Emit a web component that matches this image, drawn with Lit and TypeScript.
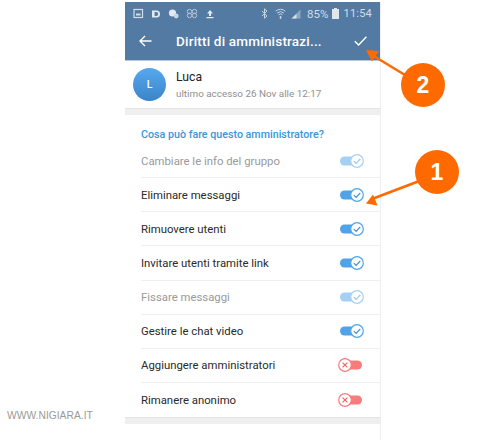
import { LitElement, html, css, svg } from "lit";
import { customElement } from "lit/decorators.js";

const rows: [string, "on" | "dim" | "off"][] = [
  ["Cambiare le info del gruppo", "dim"],
  ["Eliminare messaggi", "on"],
  ["Rimuovere utenti", "on"],
  ["Invitare utenti tramite link", "on"],
  ["Fissare messaggi", "dim"],
  ["Gestire le chat video", "on"],
  ["Aggiungere amministratori", "off"],
  ["Rimanere anonimo", "off"],
];

const toggle = (s: string) =>
  s === "off"
    ? svg`<svg class="tg" width="26" height="16" viewBox="0 0 26 16">
        <rect x="5" y="3.5" width="20" height="9" rx="4.5" fill="#f87c7c"/>
        <circle cx="8" cy="8" r="6.3" fill="#fff" stroke="#f87c7c" stroke-width="1.2"/>
        <path d="M5.6 5.6l4.8 4.8M10.4 5.6l-4.8 4.8" stroke="#ef6a6a" stroke-width="1.3" fill="none"/>
      </svg>`
    : svg`<svg class="tg" width="26" height="16" viewBox="0 0 26 16" opacity=${s === "dim" ? 0.5 : 1}>
        <rect x="1" y="3.5" width="20" height="9" rx="4.5" fill="#4fa3e6"/>
        <circle cx="18" cy="8" r="6.3" fill="#fff" stroke="#4fa3e6" stroke-width="1.2"/>
        <path d="M14.8 8.2l2.3 2.3 4.2-4.6" stroke="#3f8fd0" stroke-width="1.2" fill="none"/>
      </svg>`;

@customElement("app-root")
export class AppRoot extends LitElement {
  static styles = css`
    :host {
      display: flex;
      position: relative;
      width: 500px;
      height: 440px;
      overflow: hidden;
      background: #fff;
      font-family: Roboto, "Liberation Sans", sans-serif;
    }
    .side {
      width: 125px;
      display: flex;
      align-items: flex-end;
      padding: 0 0 17px 7px;
      box-sizing: border-box;
    }
    .mark {
      font: 10.3px/14px "Liberation Sans", sans-serif;
      color: #9a9a9a;
      white-space: nowrap;
    }
    .phone {
      width: 255px;
      margin-top: 2px;
      height: 438px;
      display: flex;
      flex-direction: column;
      border-right: 1px solid #eeeeee;
      box-sizing: content-box;
    }
    .head {
      background: #527aa3;
      height: 58px;
      border-bottom: 1px solid #b9c7d6;
      color: #fff;
      display: flex;
      flex-direction: column;
      flex: none;
    }
    .status {
      height: 25px;
      display: flex;
      align-items: center;
      padding: 0 8px 0 8px;
      gap: 7px;
      font-size: 11.5px;
      color: #d3dde8;
    }
    .status svg { display: block; flex: none; }
    .spacer { flex: 1; }
    .pct { letter-spacing: 0.1px; margin-left: -1px; }
    .batt { margin-left: -4px; }
    .sig { margin-left: -2px; }
    .time { margin-left: -2px; font-size: 11px; letter-spacing: 0.2px; }
    .bar {
      height: 33px;
      display: flex;
      align-items: center;
      padding: 0 13px 3px 14px;
    }
    .title {
      font-size: 13.5px;
      font-weight: 500;
      margin-left: 24px;
      flex: 1;
      letter-spacing: 0.2px;
      white-space: nowrap;
    }
    .user {
      height: 47px;
      background: #fff;
      display: flex;
      align-items: center;
      padding: 0 8px;
      flex: none;
      gap: 10px;
    }
    .ava {
      width: 33px;
      height: 33px;
      border-radius: 50%;
      background: linear-gradient(#57a8ee, #3a85c9);
      color: #fff;
      font-size: 10.5px;
      font-weight: 500;
      display: flex;
      align-items: center;
      justify-content: center;
    }
    .name { font-size: 12.2px; color: #222; line-height: 15px; }
    .seen { font-size: 9.9px; color: #8f8f8f; line-height: 13px; margin-top: 2px; white-space: nowrap; }
    .gap {
      height: 6px;
      background: #efefef;
      border-top: 1px solid #e4e4e4;
      flex: none;
    }
    .list { background: #fff; flex: none; padding-left: 16px; padding-top: 11px; }
    .label {
      font-size: 10.7px;
      font-weight: 500;
      color: #3b95d9;
      height: 18px;
      line-height: 18px;
    }
    .row {
      height: 34.15px;
      box-sizing: border-box;
      display: flex;
      align-items: center;
      justify-content: space-between;
      padding: 0 15px 0 0;
      font-size: 11.35px;
      color: #2a2a2a;
      border-bottom: 1px solid #efeff2;
    }
    .row:last-child { border-bottom: 0; }
    .row.dim { color: #9a9a9a; }
    .row.off { padding-right: 17px; }
    .anno { position: absolute; inset: 0; pointer-events: none; }
    .badge {
      position: absolute;
      width: 44px;
      height: 44px;
      border-radius: 50%;
      background: #ff6a00;
      color: #fff;
      font: bold 23px/44px "Liberation Sans", sans-serif;
      text-align: center;
    }
    .b1 { left: 415px; top: 150px; }
    .b2 { left: 401px; top: 63px; }
  `;

  render() {
    return html`
      <div class="side"><span class="mark">WWW.NIGIARA.IT</span></div>
      <div class="phone">
        <div class="head">
          <div class="status">
            <svg width="11" height="11" viewBox="0 0 11 11"><rect x="1" y="1.5" width="8.5" height="8" fill="none" stroke="#d3dde8" stroke-width="1.2"/><rect x="3" y="5.5" width="4.5" height="2" fill="#d3dde8"/></svg>
            <svg width="10" height="10" viewBox="0 0 10 10"><path d="M1 1.5h4.5a3.5 3.5 0 010 7H1z M3.6 3v4h1.6a2 2 0 000-4z" fill="#e2e9f0" fill-rule="evenodd"/></svg>
            <svg width="11" height="10" viewBox="0 0 11 10"><circle cx="4.5" cy="4" r="3.6" fill="#e2e9f0"/><circle cx="8.2" cy="7" r="2.4" fill="#c8d4e0"/></svg>
            <svg width="12" height="11" viewBox="0 0 12 11" fill="none" stroke="#b9c8d8"><circle cx="3.5" cy="3.5" r="2.2"/><circle cx="8.5" cy="3.5" r="2.2"/><circle cx="3.5" cy="7.5" r="2.2"/><circle cx="8.5" cy="7.5" r="2.2"/></svg>
            <svg width="10" height="10" viewBox="0 0 10 10"><path d="M5 1L8 4.4H6V7H4V4.4H2zM1.5 8h7v1.2h-7z" fill="#e2e9f0"/></svg>
            <span class="spacer"></span>
            <svg width="7" height="11" viewBox="0 0 7 11" fill="none" stroke="#c9d5e1"><path d="M1 3l5 5-2.5 2.2V.8L6 3 1 8"/></svg>
            <svg width="11" height="11" viewBox="0 0 11 11" fill="none" stroke="#c9d5e1"><path d="M.7 3.2a7 7 0 019.6 0M2.2 5a5 5 0 016.6 0M3.6 6.7a3 3 0 013.8 0"/><path d="M5.5 8v3" stroke-width="1.5"/></svg>
            <svg class="sig" width="10" height="10" viewBox="0 0 10 10"><path d="M9.5 .5v9H.5z" fill="#8ea7c0"/><path d="M5.5 5v4.5H.5z" fill="#d8e1ea"/></svg>
            <span class="pct">85%</span>
            <svg class="batt" width="7" height="11" viewBox="0 0 7 11"><path d="M2 0h3v1h2v10H0V1h2z" fill="#dfe6ee"/></svg>
            <span class="time">11:54</span>
          </div>
          <div class="bar">
            <svg width="13" height="12" viewBox="0 0 13 12" fill="none" stroke="#fff" stroke-width="1.4"><path d="M12.5 6H1.2M6 1L1 6l5 5"/></svg>
            <span class="title">Diritti di amministrazi...</span>
            <svg width="13" height="10" viewBox="0 0 13 10" fill="none" stroke="#fff" stroke-width="1.4"><path d="M.8 5.2l3.8 3.8L12.4.8"/></svg>
          </div>
        </div>
        <div class="user">
          <div class="ava">L</div>
          <div>
            <div class="name">Luca</div>
            <div class="seen">ultimo accesso 26 Nov alle 12:17</div>
          </div>
        </div>
        <div class="gap"></div>
        <div class="list">
          <div class="label">Cosa può fare questo amministratore?</div>
          <div class="rows">
            ${rows.map(
              ([t, s]) => html`<div class="row ${s}"><span>${t}</span>${toggle(s)}</div>`
            )}
          </div>
        </div>
        <div class="gap"></div>
      </div>
      <div class="anno">
        <svg width="500" height="440" viewBox="0 0 500 440">
          <path d="M418 181.500L372 199" stroke="#ff6a00" stroke-width="2.600" fill="none"/>
          <path d="M366 203.500L373 194.500L377.500 205.500z" fill="#ff6a00"/>
          <path d="M405 75L372 55" stroke="#ff6a00" stroke-width="2.600" fill="none"/>
          <path d="M366 50L379 51L372 61.500z" fill="#ff6a00"/>
        </svg>
        <div class="badge b1">1</div>
        <div class="badge b2">2</div>
      </div>
    `;
  }
}
